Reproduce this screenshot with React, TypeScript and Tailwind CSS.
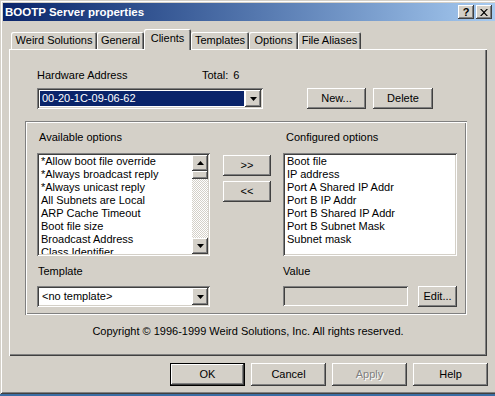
import React from 'react';

const raised = 'shadow-[inset_-1px_-1px_0_#404040,inset_1px_1px_0_#fff,inset_-2px_-2px_0_#808080]';
const sunken = 'shadow-[inset_1px_1px_0_#808080,inset_-1px_-1px_0_#fff,inset_2px_2px_0_#404040,inset_-2px_-2px_0_#d4d0c8]';
const etched = 'shadow-[inset_1px_1px_0_#808080,inset_-1px_-1px_0_#fff,inset_2px_2px_0_#fff,inset_-2px_-2px_0_#808080]';

function Arrow({ up }: { up?: boolean }) {
  return (
    <svg width="7" height="4" viewBox="0 0 7 4">
      {up ? <polygon points="3.5,0 7,4 0,4" fill="#000" /> : <polygon points="0,0 7,0 3.5,4" fill="#000" />}
    </svg>
  );
}

function Btn({ label, w, h = 21, disabled, def }: { label: string; w: number; h?: number; disabled?: boolean; def?: boolean }) {
  return (
    <div
      className={`flex items-center justify-center bg-[#d4d0c8] shrink-0 ${def ? 'shadow-[inset_0_0_0_1px_#000,inset_-2px_-2px_0_#404040,inset_2px_2px_0_#fff,inset_-3px_-3px_0_#808080]' : raised} ${disabled ? 'text-[#808080] [text-shadow:1px_1px_0_#fff]' : 'text-black'}`}
      style={{ width: w, height: h }}
    >
      {label}
    </div>
  );
}

function Combo({ w, text, selected }: { w: number; text: string; selected?: boolean }) {
  return (
    <div className={`flex bg-white p-[2px] h-[21px] shrink-0 ${sunken}`} style={{ width: w }}>
      <div className="flex-1 flex items-center p-[1px]">
        <div className={`flex-1 h-full flex items-center pl-[2px] ${selected ? 'bg-[#0a246a] text-white' : ''}`}>{text}</div>
      </div>
      <div className={`w-[16px] h-[17px] bg-[#d4d0c8] flex items-center justify-center ${raised}`}>
        <Arrow />
      </div>
    </div>
  );
}

function ListBox({ w, items, scroll }: { w: number; items: string[]; scroll?: boolean }) {
  return (
    <div className={`flex bg-white p-[2px] h-[103px] shrink-0 ${sunken}`} style={{ width: w }}>
      <div className="flex-1 overflow-hidden pl-[2px]">
        {items.map(i => (
          <div key={i} className="h-[13px] leading-[13px] whitespace-nowrap">{i}</div>
        ))}
      </div>
      {scroll && (
        <div className="w-[16px] flex flex-col bg-[repeating-conic-gradient(#d4d0c8_0%_25%,#fff_0%_50%)] bg-[length:2px_2px]">
          <div className={`h-[16px] bg-[#d4d0c8] flex items-center justify-center ${raised}`}><Arrow up /></div>
          <div className={`h-[8px] bg-[#d4d0c8] ${raised}`} />
          <div className="flex-1" />
          <div className={`h-[16px] bg-[#d4d0c8] flex items-center justify-center ${raised}`}><Arrow /></div>
        </div>
      )}
    </div>
  );
}

function Tab({ label, w, active }: { label: string; w: number; active?: boolean }) {
  return (
    <div
      className={`flex items-center justify-center bg-[#d4d0c8] rounded-t-[2px] shrink-0 shadow-[inset_1px_1px_0_#fff,inset_-1px_0_0_#404040,inset_-2px_0_0_#808080] ${active ? 'h-[21px] -mb-px relative z-10 pb-[2px]' : 'h-[17px]'}`}
      style={{ width: w }}
    >
      {label}
    </div>
  );
}

export default function App() {
  const available = [
    '*Allow boot file override',
    '*Always broadcast reply',
    '*Always unicast reply',
    'All Subnets are Local',
    'ARP Cache Timeout',
    'Boot file size',
    'Broadcast Address',
    'Class Identifier',
  ];
  const configured = [
    'Boot file',
    'IP address',
    'Port A Shared IP Addr',
    'Port B IP Addr',
    'Port B Shared IP Addr',
    'Port B Subnet Mask',
    'Subnet mask',
  ];

  return (
    <div className="w-[495px] h-[396px] overflow-hidden bg-[#3a6ea5] font-['Liberation_Sans',Arial,sans-serif] text-[11px] text-black leading-[13px]">
      <div className="w-[498px] h-[394px] bg-[#d4d0c8] p-[3px] shadow-[inset_1px_1px_0_#d4d0c8,inset_-1px_-1px_0_#404040,inset_2px_2px_0_#fff,inset_-2px_-2px_0_#808080]">
        {/* title bar */}
        <div className="h-[18px] flex items-center bg-gradient-to-r from-[#0a246a] to-[#a6caf0] pl-[2px] pr-[3px]">
          <span className="text-white font-bold text-[11.5px] flex-1">BOOTP Server properties</span>
          <div className={`w-[16px] h-[14px] bg-[#d4d0c8] flex items-center justify-center font-bold text-[11px] ${raised}`}>?</div>
          <div className={`w-[16px] h-[14px] ml-[2px] bg-[#d4d0c8] flex items-center justify-center ${raised}`}>
            <svg width="8" height="7" viewBox="0 0 8 7">
              <path d="M0 0 L1.5 0 L4 2.5 L6.5 0 L8 0 L4.75 3.5 L8 7 L6.5 7 L4 4.5 L1.5 7 L0 7 L3.25 3.5 Z" fill="#000" />
            </svg>
          </div>
        </div>

        <div className="pl-[6px] pt-[8px]">
          {/* tabs */}
          <div className="flex items-end h-[20px] pl-[2px]">
            <Tab label="Weird Solutions" w={86} />
            <Tab label="General" w={47} />
            <Tab label="Clients" w={47} active />
            <Tab label="Templates" w={58} />
            <Tab label="Options" w={49} />
            <Tab label="File Aliases" w={63} />
          </div>

          {/* panel */}
          <div className="w-[478px] h-[307px] bg-[#d4d0c8] shadow-[inset_1px_1px_0_#fff,inset_-1px_-1px_0_#404040,inset_-2px_-2px_0_#808080]">
            <div className="flex pl-[28px] pt-[20px]">
              <span className="w-[165px]">Hardware Address</span>
              <span>Total:</span>
              <span className="ml-[5px]">6</span>
            </div>
            <div className="flex pl-[28px] mt-[6px]">
              <Combo w={226} text="00-20-1C-09-06-62" selected />
              <div className="ml-[44px]"><Btn label="New..." w={59} /></div>
              <div className="ml-[7px]"><Btn label="Delete" w={60} /></div>
            </div>

            {/* options group */}
            <div className={`ml-[16px] mt-[12px] w-[442px] h-[194px] ${etched}`}>
              <div className="flex pl-[14px] pt-[10px]">
                <span className="w-[247px]">Available options</span>
                <span>Configured options</span>
              </div>
              <div className="flex pl-[12px] mt-[9px]">
                <ListBox w={173} items={available} scroll />
                <div className="ml-[13px] mt-[2px] flex flex-col gap-[5px]">
                  <Btn label=">>" w={48} h={21} />
                  <Btn label="<<" w={48} h={21} />
                </div>
                <div className="ml-[12px]">
                  <ListBox w={174} items={configured} />
                </div>
              </div>
              <div className="flex pl-[13px] mt-[9px]">
                <span className="w-[245px]">Template</span>
                <span>Value</span>
              </div>
              <div className="flex items-start pl-[12px] mt-[8px]">
                <Combo w={173} text="<no template>" />
                <div className={`ml-[73px] w-[125px] h-[20px] bg-[#d4d0c8] ${sunken}`} />
                <div className="ml-[10px]"><Btn label="Edit..." w={39} /></div>
              </div>
            </div>

            <div className="mt-[10px] text-center">Copyright © 1996-1999 Weird Solutions, Inc. All rights reserved.</div>
          </div>

          {/* dialog buttons */}
          <div className="flex gap-[6px] pl-[161px] mt-[7px]">
            <Btn label="OK" w={75} h={23} def />
            <Btn label="Cancel" w={75} h={23} />
            <Btn label="Apply" w={75} h={23} disabled />
            <Btn label="Help" w={75} h={23} />
          </div>
        </div>
      </div>
    </div>
  );
}
